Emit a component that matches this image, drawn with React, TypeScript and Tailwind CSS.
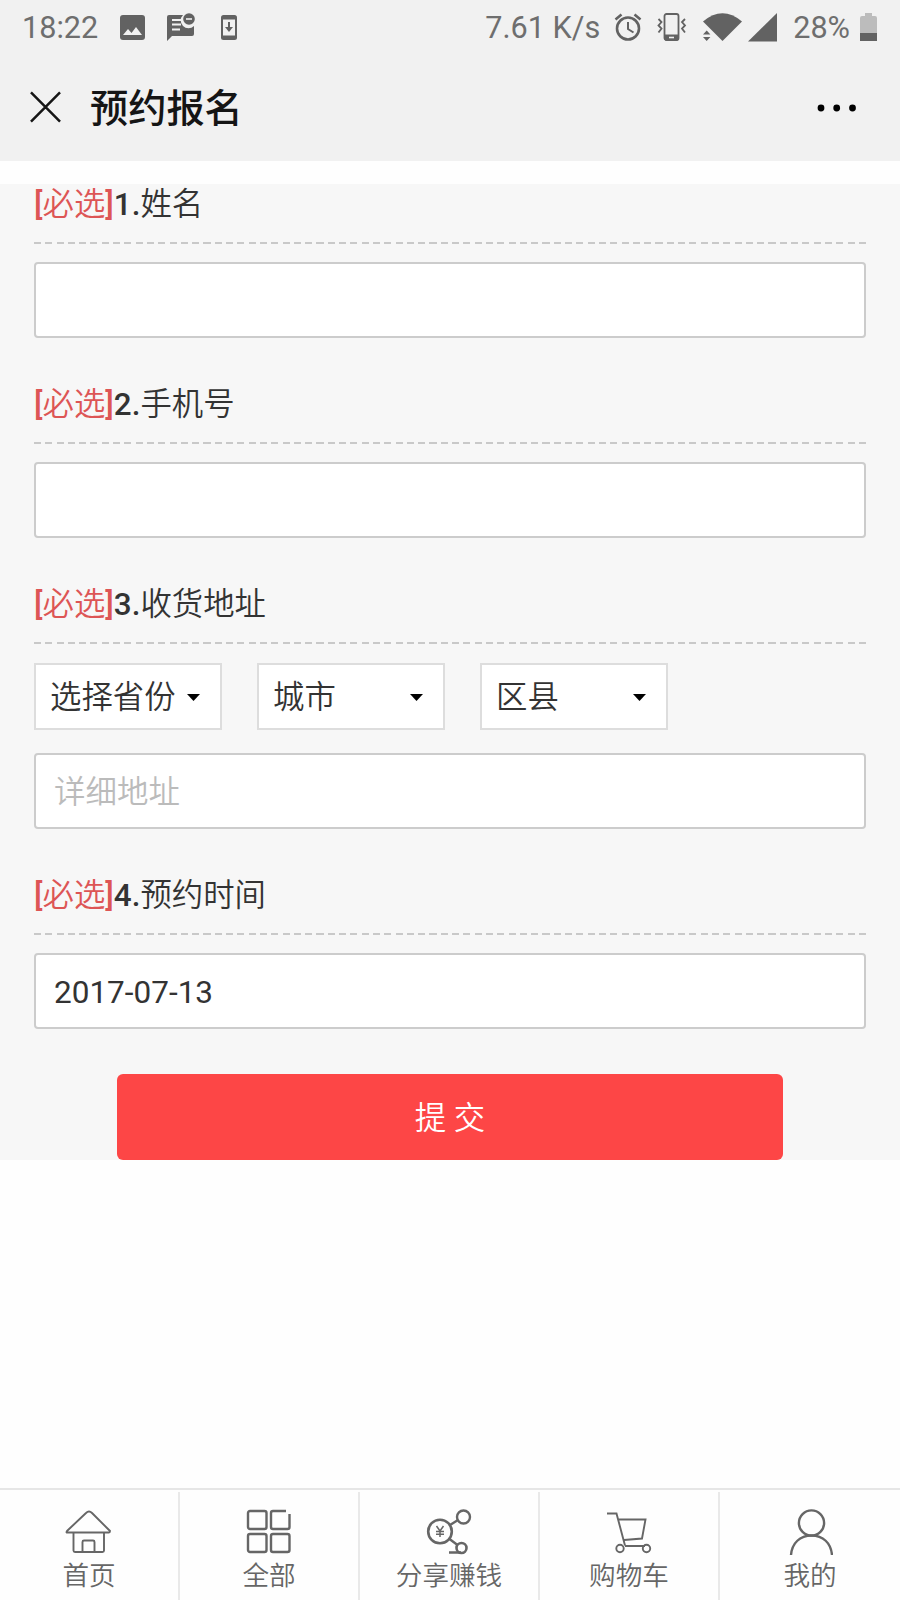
import React, { useState } from "react";

type FieldProps = {
  index: number;
  label: string;
  children: React.ReactNode;
};

const Field: React.FC<FieldProps> = ({ index, label, children }) => (
  <section className="h-[200px] last:h-auto">
    <h2 className="h-[58px] pt-[2px] text-[31.4px] leading-[38px] font-[350] text-[#333]">
      <span className="text-[#dd5555]">
        <b className="font-medium">[</b>必选<b className="font-medium">]</b>
      </span>
      <b className="font-medium">{index}.</b>
      {label}
    </h2>
    <div className="h-[2px] bg-[repeating-linear-gradient(90deg,#c9c9c9_0_7px,transparent_7px_11.3px)]" />
    <div className="pt-[18px]">{children}</div>
  </section>
);

const inputClass =
  "block h-[76px] w-full rounded-[4px] border-2 border-[#cccccc] bg-white px-[18px] pt-[2px] text-[31.5px] text-[#333] outline-none placeholder:font-[350] placeholder:text-[#bbb]";

const regions = ["选择省份", "城市", "区县"];

const StatusBar = () => (
  <div className="flex h-[54px] items-center text-[30.6px] text-[#6e6e6e]">
    <span className="ml-[22px] w-[98px] pt-px">18:22</span>
    <svg className="h-[25px] w-[25px]" viewBox="0 0 25 25">
      <rect width="25" height="25" rx="3" fill="#626262" />
      <path d="M3 20l5-6 3.5 4L16 12l6 8z" fill="#f1f1f1" />
    </svg>
    <svg className="ml-[21px] h-[28px] w-[29px]" viewBox="0 0 29 28">
      <path d="M3 2h14a7.5 7.5 0 0 0 11 11v8q0 2-2 2H6l-5 5V4q0-2 2-2z" fill="#626262" />
      <path d="M6 7h9M6 11.500h9M6 16.500h8" stroke="#f1f1f1" strokeWidth="2" />
      <circle cx="23" cy="6" r="5.800" fill="#626262" />
      <path d="M20 6h6" stroke="#f1f1f1" strokeWidth="1.6" />
    </svg>
    <svg className="ml-[26px] h-[25px] w-[16px]" viewBox="0 0 16 25">
      <rect width="16" height="25" rx="2.5" fill="#626262" />
      <path d="M2 4.500h12v16H2z" fill="#f1f1f1" />
      <path d="M8 7v8" stroke="#626262" strokeWidth="2" />
      <path d="M4 12h8l-4 5z" fill="#626262" />
    </svg>
    <span className="ml-auto pt-px">7.61 K/s</span>
    <svg className="ml-[14px] h-[28px] w-[28px]" viewBox="0 0 28 28" fill="none" stroke="#626262">
      <circle cx="14" cy="15.500" r="11" strokeWidth="2.600" />
      <path d="M1.500 6.500l6-5M26.500 6.500l-6-5" strokeWidth="2.600" />
      <path d="M14 9v7l5.500 3.500" strokeWidth="2" />
    </svg>
    <svg className="ml-[15px] h-[28px] w-[30px]" viewBox="0 0 30 28" fill="none" stroke="#626262">
      <rect x="7.500" y="1" width="14" height="26" rx="2" strokeWidth="1.800" />
      <path d="M8 22h13v5H8z" fill="#626262" />
      <path d="M12 24.500h5" stroke="#f1f1f1" strokeWidth="1.600" />
      <path d="M1.500 6l3 3-3 3.500 3 3-3 4M28 6l-3 3 3 3.500-3 3 3 4" strokeWidth="1.800" />
    </svg>
    <svg className="ml-[16px] h-[29px] w-[39px]" viewBox="0 0 39 29" fill="#626262">
      <path d="M0 8.500Q19.500-8 39 8.500L19.500 28z" />
      <path d="M0 21.500l3.700-4 3.700 4zM0 24l3.700 4 3.700-4z" />
    </svg>
    <svg className="ml-[6px] h-[29px] w-[29px]" viewBox="0 0 29 29" fill="#626262">
      <path d="M29 0v28.500H0z" />
    </svg>
    <span className="ml-[16px] pt-px">28%</span>
    <svg className="mr-[23px] ml-[10px] h-[28px] w-[17px]" viewBox="0 0 17 28">
      <path d="M5 0h7v3h3q2 0 2 2v15H0V5q0-2 2-2h3z" fill="#bcbcbc" />
      <path d="M0 20h17v8H0z" fill="#626262" />
    </svg>
  </div>
);

const tabs = [
  {
    label: "首页",
    icon: (
      <>
        <path d="M2 22L21 4q3-3 6 0l18 18q0 1.500-1 1.500H2q-1 0-0-1.500z" />
        <path d="M8.500 24v17.500q0 1.500 1.500 1.500h27.500q1.500 0 1.500-1.500V24M17.500 43V33q0-1.500 1.500-1.500h9q1.500 0 1.500 1.500v10" />
      </>
    ),
  },
  {
    label: "全部",
    icon: (
      <g strokeWidth="2.400">
        <rect x="3" y="2" width="18.500" height="18" rx="2" />
        <rect x="3" y="25" width="18.500" height="18" rx="2" />
        <rect x="26" y="25" width="18.500" height="18" rx="2" />
        <path d="M41 2H28q-2 0-2 2v14q0 2 2 2h14.500q2 0 2-2V5" />
      </g>
    ),
  },
  {
    label: "分享赚钱",
    icon: (
      <>
        <circle cx="15" cy="22.500" r="11.800" strokeWidth="2.600" />
        <circle cx="38.500" cy="8" r="6.500" strokeWidth="2.400" />
        <circle cx="36.500" cy="39" r="5" strokeWidth="2.600" />
        <path d="M25 16l8-5M24.500 30l8 6M24 43.500h12" strokeWidth="2.400" />
        <path d="M11.500 17l3.500 5 3.500-5M15 22v6M11 22.500h8M11 25.300h8" strokeWidth="1.500" />
      </>
    ),
  },
  {
    label: "购物车",
    icon: (
      <>
        <path d="M2 4.500h9.500L20 36.500M13 10.500h27.500l-3.500 19-18 1.500M20 37h20" />
        <circle cx="15" cy="39.500" r="3.700" />
        <circle cx="41.500" cy="39.500" r="3.700" />
      </>
    ),
  },
  {
    label: "我的",
    icon: (
      <>
        <circle cx="25.500" cy="14" r="12.600" strokeWidth="2.400" />
        <path d="M5 46c1-12 9-19.500 20.500-19.500S45 34 46 46" strokeWidth="2.400" />
      </>
    ),
  },
];

const App: React.FC = () => {
  const [name, setName] = useState("");
  const [phone, setPhone] = useState("");
  const [address, setAddress] = useState("");
  const [date, setDate] = useState("2017-07-13");

  return (
    <div className="flex h-[1600px] w-[900px] flex-col bg-[#fefefe] font-[Roboto,'Noto_Sans_CJK_SC',sans-serif]">
      {/* Header */}
      <header className="h-[161px] bg-[#f1f1f1]">
        <StatusBar />
        <div className="flex h-[107px] items-center pr-[43px] pl-[30px]">
          <svg className="-mt-px h-[32px] w-[31px]" viewBox="0 0 32 32" stroke="#151515" strokeWidth="2.600">
            <path d="M1 1l30 30M31 1L1 31" />
          </svg>
          <h1 className="ml-[29px] pt-[3px] text-[38.2px] leading-[56px] font-medium text-[#151515]">预约报名</h1>
          <svg className="ml-auto h-[8px] w-[40px]" viewBox="0 0 40 8">
            <circle cx="4" cy="4" r="3.400" />
            <circle cx="19.700" cy="4" r="3.400" />
            <circle cx="35.500" cy="4" r="3.400" />
          </svg>
        </div>
      </header>

      {/* Form */}
      <main className="mt-[23px] h-[976px] bg-[#f7f7f7] px-[34px]">
        <Field index={1} label="姓名">
          <input className={inputClass} value={name} onChange={(e) => setName(e.target.value)} />
        </Field>
        <Field index={2} label="手机号">
          <input className={inputClass} value={phone} onChange={(e) => setPhone(e.target.value)} />
        </Field>
        <div className="h-[291px]">
          <Field index={3} label="收货地址">
            <div className="mb-[23px] flex gap-[35px] pt-px">
              {regions.map((region) => (
                <button
                  key={region}
                  className="flex h-[67px] w-[188px] items-center justify-between border-2 border-[#dddddd] bg-white pr-[20px] pl-[14px] text-[31.4px] font-[350] text-[#333]"
                >
                  <span className="pt-[2px]">{region}</span>
                  <svg className="mt-[2px] h-[7px] w-[13px] shrink-0" viewBox="0 0 13 7">
                    <path d="M0 0h13L6.500 7z" />
                  </svg>
                </button>
              ))}
            </div>
            <input
              className={inputClass}
              placeholder="详细地址"
              value={address}
              onChange={(e) => setAddress(e.target.value)}
            />
          </Field>
        </div>
        <div className="h-[199px]">
          <Field index={4} label="预约时间">
            <input className={inputClass} value={date} onChange={(e) => setDate(e.target.value)} />
          </Field>
        </div>
        <button className="mx-auto block h-[86px] w-[666px] rounded-[6px] bg-[#fd4646] pt-[3px] text-[31.4px] font-[350] text-white">
          提 交
        </button>
      </main>

      {/* Bottom tabs */}
      <nav className="mt-auto flex h-[112px] border-t-2 border-[#e6e6e6] pt-[2px]">
        {tabs.map((tab) => (
          <a
            key={tab.label}
            className="flex w-[180px] flex-col items-center border-r-2 border-[#e9e9e9] pt-[17px] text-[26.6px] leading-[40px] font-[350] text-[#666] last:border-r-0"
          >
            <svg className="mr-[2px] h-[46px] w-[47px] shrink-0" viewBox="0 0 47 46" fill="none" stroke="#666" strokeWidth="1.900">
              {tab.icon}
            </svg>
            <span className="mt-px">{tab.label}</span>
          </a>
        ))}
      </nav>
    </div>
  );
};

export default App;
